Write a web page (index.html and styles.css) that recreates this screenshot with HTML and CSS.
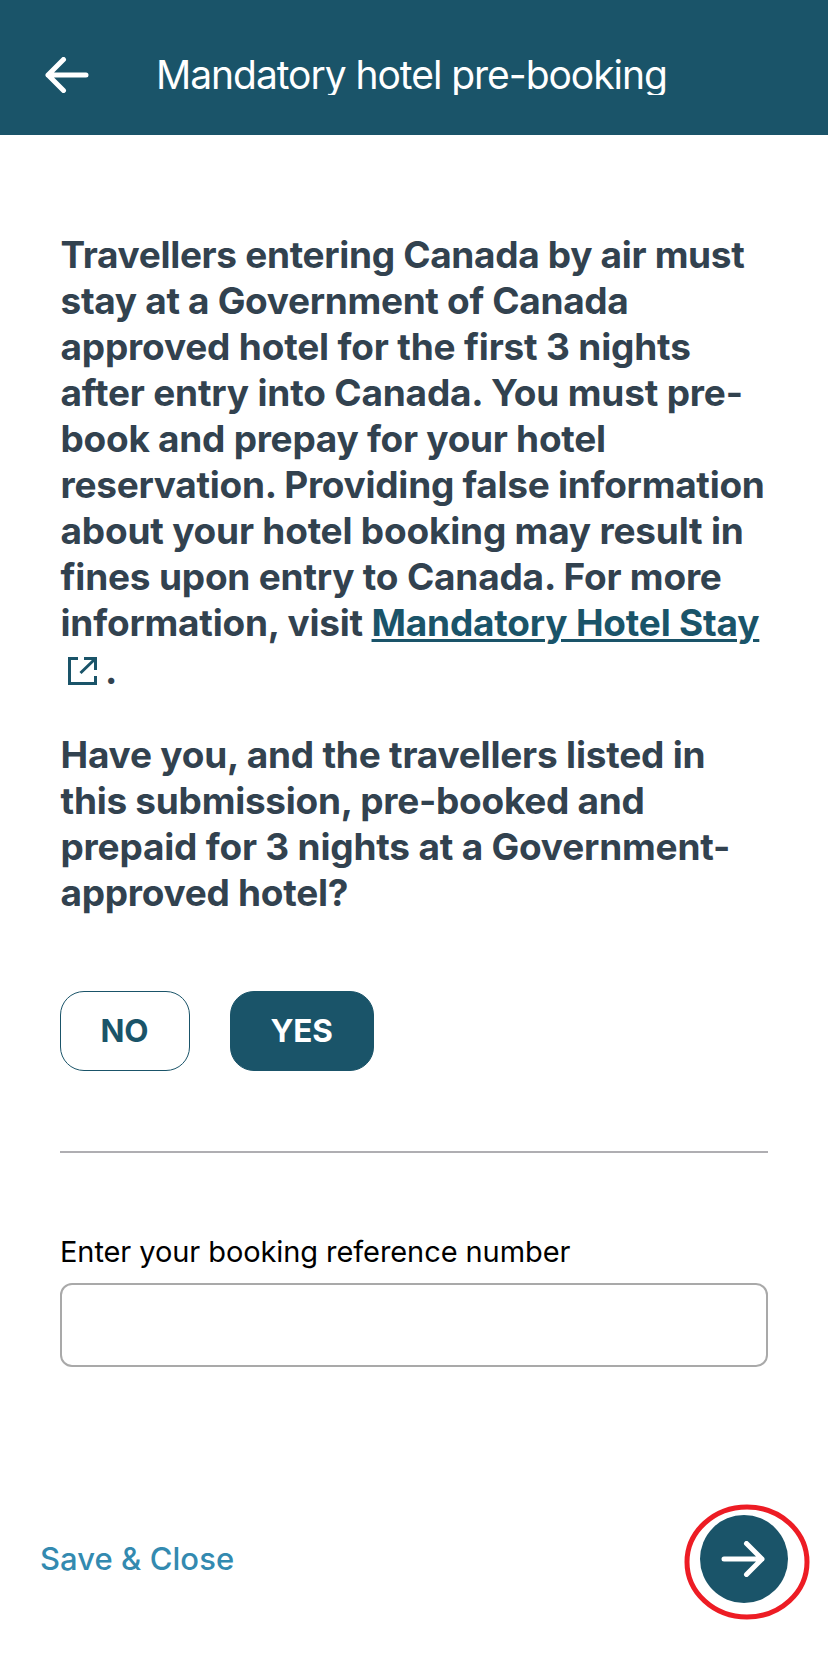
FILE: index.html
```html
<!DOCTYPE html>
<html lang="en">
<head>
<meta charset="utf-8">
<title>Mandatory hotel pre-booking</title>
<link rel="stylesheet" href="styles.css">
</head>
<body>
<header class="topbar">
  <svg class="back" width="44" height="36" viewBox="0 0 44 36"><path d="M41 18H3M18.500 2.500L3 18L18.500 33.500"/></svg>
  <h1 class="title">Mandatory hotel pre-booking</h1>
</header>
<main class="content">
  <p class="notice"><span class="line tight">Travellers entering Canada by air must</span> <span class="line tight">stay at a Government of Canada</span> <span class="line loose">approved hotel for the first 3 nights</span> <span class="line loose">after entry into Canada. You must pre-</span><span class="line snug">book and prepay for your hotel</span> <span class="line snug">reservation. Providing false information</span> <span class="line">about your hotel booking may result in</span> <span class="line">fines upon entry to Canada. For more</span> <span class="line">information, visit <a class="link" href="#">Mandatory Hotel Stay</a></span> <span class="line last"><svg class="external" width="29" height="28" viewBox="0 0 29 28"><path d="M10 1.500H1.500V26.500H27.500V19M16 1.500H27.500V13M27 2L12.500 16"/></svg>.</span></p>
  <p class="question"><span class="line">Have you, and the travellers listed in</span> <span class="line snug">this submission, pre-booked and</span> <span class="line">prepaid for 3 nights at a Government-</span><span class="line snug">approved hotel?</span></p>
  <div class="choices">
    <button class="choice no">NO</button>
    <button class="choice yes">YES</button>
  </div>
  <hr class="rule">
  <label class="label" for="ref">Enter your booking reference number</label>
  <input class="field" id="ref" type="text">
</main>
<footer class="footer">
  <a class="save" href="#">Save &amp; Close</a>
  <button class="next" aria-label="Next">
    <svg class="forward" width="44" height="36" viewBox="0 0 44 36"><path d="M3 18H41M25.500 2.500L41 18L25.500 33.500"/></svg>
    <svg class="ring" width="126" height="116" viewBox="0 0 126 116"><ellipse cx="63" cy="58" rx="60" ry="55"/></svg>
  </button>
</footer>
</body>
</html>
```
FILE: styles.css
```css
* { box-sizing: border-box; }
body { margin: 0; background: #fff; font-family: Inter, "Liberation Sans", sans-serif; width: 828px; height: 1668px; display: flex; flex-direction: column; }
.topbar { height: 135px; background: #1a5469; display: flex; align-items: flex-start; }
.back { margin: 57px 0 0 45px; }
svg { fill: none; stroke: #fff; stroke-width: 5; stroke-linecap: round; stroke-linejoin: round; flex: none; }
.title { margin: 50px 0 0 67px; height: 45px; line-height: 50px; overflow: hidden; color: #fff; font-size: 39px; font-weight: 400; white-space: nowrap; letter-spacing: -1.040px; }
.content { padding: 97px 60px 0; }
.notice, .question { margin: 0; color: #32424f; font-size: 37px; font-weight: 650; line-height: 46px; }
.line { display: block; white-space: nowrap; letter-spacing: -0.200px; padding-left: 0.500px; }
.tight { letter-spacing: -0.320px; }
.snug { letter-spacing: -0.265px; }
.loose { letter-spacing: -0.180px; }
.last { line-height: 48px; height: 48px; }
.question { margin-top: 38px; }
.link { color: #1a5469; text-decoration: underline; text-decoration-thickness: 2.500px; text-underline-offset: 3px; }
.external { stroke: #1a5469; stroke-width: 3; stroke-linecap: butt; stroke-linejoin: miter; margin: 0 8px 0 7.500px; vertical-align: -1px; }
.last { position: relative; top: 1px; }
.choices { display: flex; gap: 40px; margin-top: 75px; }
.choice { height: 80px; border: 1px solid #1a5469; border-radius: 24px; padding: 0 1px 0 0; font: 660 31.500px/78px Inter, sans-serif; color: #1a5469; background: #fff; letter-spacing: -0.200px; }
.no { width: 130px; }
.yes { width: 144px; background: #1a5469; color: #fff; }
.rule { margin: 80px 0 0; border: 0; height: 2px; background: #afaeb2; }
.label { display: block; margin-top: 79px; font-size: 29px; line-height: 40px; color: #000; white-space: nowrap; letter-spacing: -0.080px; }
.field { display: block; margin-top: 11px; width: 708px; height: 84px; border: 2px solid #a9a9a9; border-radius: 12px; background: #fff; padding: 0 20px; font: 30px Inter, sans-serif; outline: 0; }
.footer { margin-top: auto; height: 153px; padding: 0 40px; display: flex; justify-content: space-between; align-items: flex-start; }
.save { margin-top: 24px; font-size: 31px; line-height: 40px; color: #338ab0; font-weight: 500; text-decoration: none; letter-spacing: 0.050px; }
.next { position: relative; width: 88px; height: 88px; border: 0; border-radius: 50%; padding: 0; background: #1a5469; display: flex; align-items: center; justify-content: center; }
.forward { margin-right: 2px; }
.ring { position: absolute; left: -16.500px; top: -11.500px; stroke: #ed1c24; stroke-width: 5; }
```
